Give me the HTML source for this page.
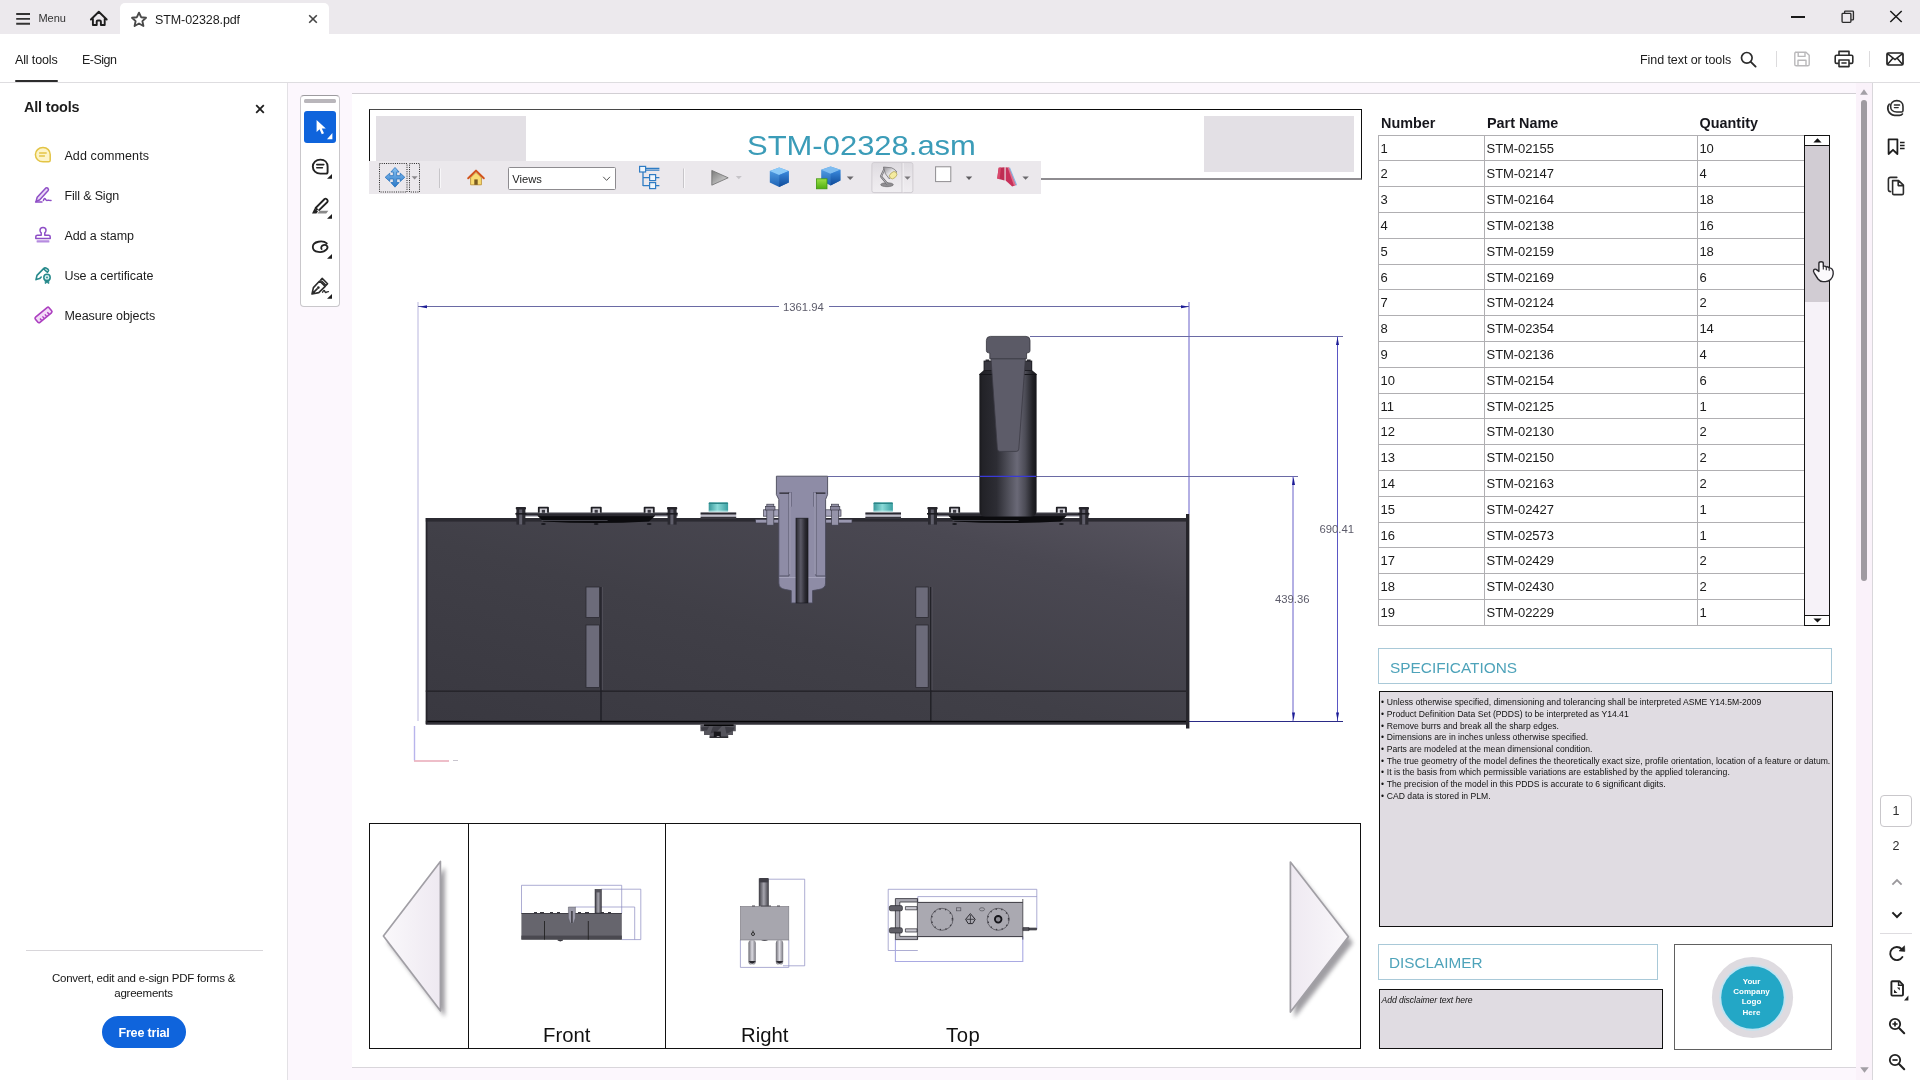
<!DOCTYPE html>
<html lang="en">
<head>
<meta charset="utf-8">
<title>STM-02328.pdf</title>
<style>
*{box-sizing:border-box;margin:0;padding:0}
html,body{width:1920px;height:1080px;overflow:hidden}
body{position:relative;background:#fcf7fd;font-family:"Liberation Sans",sans-serif;color:#2c2c2c;font-size:12.5px}
.abs{position:absolute}
.t{position:absolute;white-space:nowrap;line-height:1}
svg{position:absolute;overflow:visible}
#titlebar{left:0;top:0;width:1920px;height:34px;background:#ece9ed}
#tab{left:120px;top:3px;width:209px;height:32px;background:#fff;border-radius:5px 5px 0 0}
#toolbar{left:0;top:34px;width:1920px;height:49px;background:#fff;border-bottom:1px solid #dedde0}
#left{left:0;top:83px;width:288px;height:997px;background:#fff;border-right:1px solid #e3e1e5}
#rail{left:1872px;top:83px;width:48px;height:997px;background:#fff;border-left:1px solid #d9d7db}
#page{left:352px;top:93px;width:1504px;height:975px;background:#fff;border-top:1px solid #d2cfd4;border-bottom:1px solid #d9d6db}
#qt{left:300px;top:95px;width:40px;height:212px;background:#fff;border:1px solid #c9c7cb;border-top-color:#9d9b9f;border-radius:4px}
.gray{background:#e0dce2}
.li{left:64.4px;font-size:12.5px;color:#1c1c1c}
.cell{position:absolute;letter-spacing:-0.08px;font-size:13px;line-height:1;color:#1a1a1a;white-space:nowrap}
.hl{position:absolute;height:1px;background:#b0afb2;left:1378px;width:426px}
.vl{position:absolute;width:1px;background:#b0afb2;top:135px;height:491px}
.sp{position:absolute;left:1381px;font-size:8.6px;line-height:1;color:#111;white-space:nowrap;letter-spacing:0.005px}
</style>
</head>
<body>
<div id="root" style="position:absolute;left:0;top:0;width:1920px;height:1080px;will-change:transform">
<!-- title bar -->
<div id="titlebar" class="abs"></div>
<div id="tab" class="abs"></div>
<svg style="left:15px;top:12px" width="16" height="14" viewBox="0 0 16 14"><path d="M1.2 2h13.8M1.2 6.9h13.8M1.2 11.8h13.8" stroke="#333" stroke-width="1.9" fill="none"/></svg>
<div class="t" style="left:38.4px;top:13.4px;font-size:11px;color:#333">Menu</div>
<svg style="left:89px;top:10px" width="20" height="17" viewBox="0 0 20 17"><path d="M1.9 9.5 L9.8 1.7 L17.7 9.5 M3.9 8.4 V15 H7.7 V11.6 Q7.7 10.5 8.8 10.5 H10.8 Q11.9 10.5 11.9 11.6 V15 H15.7 V8.4" stroke="#1e1e1e" stroke-width="1.9" fill="none" stroke-linejoin="round" stroke-linecap="round"/></svg>
<svg style="left:130px;top:10.6px" width="18" height="17" viewBox="0 0 18 17"><path d="M9 1.7 L11.1 6.2 L16 6.8 L12.4 10.1 L13.4 15 L9 12.5 L4.6 15 L5.6 10.1 L2 6.8 L6.9 6.2 Z" stroke="#4a4a4a" stroke-width="1.9" fill="none" stroke-linejoin="round"/></svg>
<div class="t" style="left:155px;top:14px;font-size:12.5px;letter-spacing:-0.09px;color:#1c1c1c">STM-02328.pdf</div>
<svg style="left:308px;top:14px" width="10" height="10" viewBox="0 0 10 10"><path d="M1.2 1.2 L8.8 8.8 M8.8 1.2 L1.2 8.8" stroke="#444" stroke-width="1.6" fill="none"/></svg>
<!-- window controls -->
<svg style="left:1790px;top:15px" width="16" height="4"><path d="M1 2h14" stroke="#1a1a1a" stroke-width="2"/></svg>
<svg style="left:1840.8px;top:10px" width="14.4" height="13.5" viewBox="0 0 16 15"><rect x="1.2" y="3.8" width="9.8" height="10" rx="0.9" fill="none" stroke="#2c2c2c" stroke-width="1.5"/><path d="M4 3.6 V2 Q4 1.2 4.8 1.2 H13 Q13.8 1.2 13.8 2 V10.2 Q13.8 11 13 11 H11.2" fill="none" stroke="#2c2c2c" stroke-width="1.5"/></svg>
<svg style="left:1889px;top:10px" width="14" height="13" viewBox="0 0 14 13"><path d="M1.3 1 L12.7 12 M12.7 1 L1.3 12" stroke="#1a1a1a" stroke-width="1.5" fill="none"/></svg>
<!-- toolbar -->
<div id="toolbar" class="abs"></div>
<div class="t" style="left:15px;top:54px;font-size:12.5px;letter-spacing:-0.14px;color:#161616">All tools</div>
<div class="abs" style="left:15px;top:80px;width:43px;height:2px;background:#2c2c2c;border-radius:1px"></div>
<div class="t" style="left:82px;top:54px;font-size:12.5px;letter-spacing:-0.5px;color:#222">E-Sign</div>
<div class="t" style="left:1640px;top:54px;font-size:12.5px;letter-spacing:-0.07px;color:#1c1c1c">Find text or tools</div>
<svg style="left:1740px;top:51px" width="17" height="17" viewBox="0 0 17 17"><circle cx="6.8" cy="6.8" r="5.3" fill="none" stroke="#2c2c2c" stroke-width="1.7"/><path d="M10.8 10.8 L15.6 15.6" stroke="#2c2c2c" stroke-width="1.9" stroke-linecap="round"/></svg>
<div class="abs" style="left:1776px;top:51px;width:1px;height:16px;background:#dcdbdd"></div>
<svg style="left:1793px;top:51px" width="18" height="16" viewBox="0 0 18 16"><path d="M2 1.2 H13 L16.2 4.2 V13.4 Q16.2 14.8 14.8 14.8 H3.2 Q1.8 14.8 1.8 13.4 V2.6 Q1.8 1.2 3.2 1.2 M5.2 1.4 V5.4 H12 V1.4 M5 14.6 V9.2 H13 V14.6" fill="none" stroke="#b9b8ba" stroke-width="1.4" stroke-linejoin="round"/></svg>
<svg style="left:1834px;top:50px" width="20" height="18" viewBox="0 0 20 18"><path d="M5 5 V1.4 H15 V5 M5 13.4 H2.6 Q1.2 13.4 1.2 12 V6.6 Q1.2 5.2 2.6 5.2 H17.4 Q18.8 5.2 18.8 6.6 V12 Q18.8 13.4 17.4 13.4 H15 M5 10 H15 V16.6 H5 Z M7.4 13 H12.6" fill="none" stroke="#2c2c2c" stroke-width="1.6" stroke-linejoin="round"/></svg>
<div class="abs" style="left:1869px;top:51px;width:1px;height:16px;background:#dcdbdd"></div>
<svg style="left:1886px;top:52px" width="18" height="14" viewBox="0 0 18 14"><rect x="1" y="1" width="16" height="12" rx="1.2" fill="none" stroke="#222" stroke-width="1.7"/><path d="M1.4 1.6 L9 7.6 L16.6 1.6 M1.4 12.4 L6.6 6.6 M16.6 12.4 L11.4 6.6" fill="none" stroke="#222" stroke-width="1.5"/></svg>
<!-- left panel -->
<div id="left" class="abs"></div>
<div class="t" style="left:24px;top:100px;font-size:14.4px;font-weight:bold;letter-spacing:-0.15px;color:#1e1e1e">All tools</div>
<svg style="left:255px;top:104px" width="10" height="10" viewBox="0 0 10 10"><path d="M1.2 1.2 L8.8 8.8 M8.8 1.2 L1.2 8.8" stroke="#1e1e1e" stroke-width="1.8" fill="none"/></svg>
<!-- add comments -->
<svg style="left:34px;top:146px" width="18" height="18" viewBox="0 0 18 18"><path d="M9 1.6 C4.6 1.6 1.4 4.6 1.4 8.6 C1.4 12.6 4.6 15.8 9 15.8 H14.6 Q16.2 15.8 16.2 14.2 V8.6 C16.2 4.6 13.4 1.6 9 1.6 Z" fill="#fdf4c8" stroke="#e3c445" stroke-width="1.5"/><path d="M5.6 7 H12.2 M5.6 10 H10.4" stroke="#e3c445" stroke-width="1.4" stroke-linecap="round"/></svg>
<div class="t li" style="top:150px;letter-spacing:0.11px">Add comments</div>
<!-- fill & sign -->
<svg style="left:34px;top:186px" width="19" height="18" viewBox="0 0 19 18"><path d="M2 15.6 L3.2 11.2 L11.6 2.2 Q12.8 1.2 14 2.4 Q15 3.6 14 4.8 L5.8 13.8 Z" fill="#ead9f6" stroke="#8e4ec6" stroke-width="1.5" stroke-linejoin="round"/><path d="M1.6 16 H8 M9.4 14.4 Q10.4 11.6 11.4 13.2 T13.2 14.4 T15 14.2 L17 14.4" fill="none" stroke="#8e4ec6" stroke-width="1.5" stroke-linecap="round"/></svg>
<div class="t li" style="top:190px;letter-spacing:-0.14px">Fill &amp; Sign</div>
<!-- stamp -->
<svg style="left:34px;top:226px" width="18" height="18" viewBox="0 0 18 18"><path d="M9 1.4 Q12 1.4 12 4.2 Q12 5.8 10.8 6.8 V9.2 H14.6 Q16.2 9.2 16.2 10.8 V12.6 H1.8 V10.8 Q1.8 9.2 3.4 9.2 H7.2 V6.8 Q6 5.8 6 4.2 Q6 1.4 9 1.4 Z" fill="#fff" stroke="#8e4ec6" stroke-width="1.5" stroke-linejoin="round"/><rect x="2.6" y="14.2" width="12.8" height="2.4" rx="0.6" fill="#b68be0"/></svg>
<div class="t li" style="top:230px;letter-spacing:-0.06px">Add a stamp</div>
<!-- certificate -->
<svg style="left:34px;top:266px" width="19" height="19" viewBox="0 0 19 19"><path d="M2 13.6 L3 9.4 L9.6 2.6 Q10.6 1.6 11.8 2 L14 3.2 Q15 4.2 14.2 5.2 L13.4 6.2 M2 13.6 L5.6 12.6 L7.2 11 M9.8 3 L12.6 5.6" fill="none" stroke="#26898b" stroke-width="1.6" stroke-linejoin="round" stroke-linecap="round"/><circle cx="13" cy="11.4" r="3.2" fill="#d6f0f0" stroke="#26898b" stroke-width="1.5"/><circle cx="13" cy="11.4" r="0.9" fill="#26898b"/><path d="M11.2 14.2 V17.6 L13 16.4 L14.8 17.6 V14.2" fill="#26898b" stroke="#26898b" stroke-width="0.8" stroke-linejoin="round"/></svg>
<div class="t li" style="top:270px;letter-spacing:-0.04px">Use a certificate</div>
<!-- measure -->
<svg style="left:34px;top:306px" width="19" height="18" viewBox="0 0 19 18"><g transform="rotate(-40 9.5 9)"><rect x="0.6" y="5.6" width="17.8" height="6.8" rx="1.4" fill="#f3dcf7" stroke="#ac3fc0" stroke-width="1.6"/><path d="M4.6 9.4 V12 M7.8 9.4 V12 M11 9.4 V12 M14.2 9.4 V12" stroke="#ac3fc0" stroke-width="1.4"/></g></svg>
<div class="t li" style="top:310px;letter-spacing:-0.06px">Measure objects</div>
<!-- bottom promo -->
<div class="abs" style="left:26px;top:949.6px;width:237px;height:1px;background:#d8d6da"></div>
<div class="t" style="left:0;width:287px;text-align:center;top:973px;font-size:11.5px;letter-spacing:-0.22px;color:#161616">Convert, edit and e-sign PDF forms &amp;</div>
<div class="t" style="left:0;width:287px;text-align:center;top:988px;font-size:11.5px;letter-spacing:-0.22px;color:#161616">agreements</div>
<div class="abs" style="left:102px;top:1016px;width:84px;height:32px;border-radius:16px;background:#0f64dc"></div>
<div class="t" style="left:102px;width:84px;text-align:center;top:1026.8px;font-size:12.5px;font-weight:bold;letter-spacing:-0.18px;color:#fff">Free trial</div>
<!-- quick tools -->
<div id="qt" class="abs"></div>
<div class="abs" style="left:304px;top:99px;width:32px;height:4px;border-radius:1.5px;background:#b9b6bb"></div>
<div class="abs" style="left:304px;top:111px;width:32px;height:32px;border-radius:3px;background:#0f64dc"></div>
<svg style="left:314.6px;top:119px" width="14" height="17" viewBox="0 0 14 17"><path d="M1.6 1 L1.6 13 L4.6 10.2 L6.8 15.2 L9 14.2 L6.8 9.4 L10.8 9.4 Z" fill="#fff"/></svg>
<svg style="left:327px;top:132.6px" width="6" height="7"><path d="M5.4 0 V6.2 H0 Z" fill="#fff"/></svg>
<svg style="left:311px;top:158px" width="20" height="20" viewBox="0 0 20 20"><path d="M9.4 1.6 C5 1.6 1.8 4.6 1.8 8.6 C1.8 12.6 5 15.6 9.4 15.6 H15 Q16.6 15.6 16.6 14 V8.6 C16.6 4.6 13.8 1.6 9.4 1.6 Z" fill="none" stroke="#222" stroke-width="1.9"/><path d="M5.8 6.6 H12.8 M5.8 9.8 H11.4" stroke="#222" stroke-width="1.6" stroke-linecap="round"/></svg>
<svg style="left:327px;top:174px" width="5" height="5"><path d="M5 0 V4.8 H0 Z" fill="#1e1e1e"/></svg>
<svg style="left:311px;top:197px" width="20" height="20" viewBox="0 0 20 20"><path d="M6.6 13 L4.6 11 L13.6 2 Q14.6 1.2 15.6 2.2 L16.4 3 Q17.2 4 16.4 5 L7.6 13.6" fill="none" stroke="#222" stroke-width="1.8" stroke-linejoin="round"/><path d="M1 16.6 L3.6 11.2 L7 14.6 L5.4 16.6 Z" fill="#222"/><path d="M6.4 16.6 L8.6 13.8 H17.4 L15.2 16.6 Z" fill="#8a8a8a"/></svg>
<svg style="left:327px;top:214px" width="5" height="5"><path d="M5 0 V4.8 H0 Z" fill="#1e1e1e"/></svg>
<svg style="left:311px;top:238px" width="20" height="18" viewBox="0 0 20 18"><path d="M15.8 5.4 C12 2 1.8 3.2 1.8 9 C1.8 14.8 11.8 15.6 15.6 11.4 C17.8 8.8 15.6 6.2 12.4 7.2 C10.4 7.8 9.6 9.8 10.6 11" fill="none" stroke="#222" stroke-width="1.8" stroke-linecap="round"/></svg>
<svg style="left:327px;top:254px" width="5" height="5"><path d="M5 0 V4.8 H0 Z" fill="#1e1e1e"/></svg>
<svg style="left:310px;top:277px" width="22" height="20" viewBox="0 0 22 20"><path d="M2 17 L3.4 10.6 L9.6 4 L15.2 9.4 L8.8 15.6 Z M2.4 16.6 L7.6 11.4" fill="none" stroke="#2c2c2c" stroke-width="1.6" stroke-linejoin="round"/><circle cx="8.4" cy="10.6" r="1.3" fill="#2c2c2c"/><path d="M10.6 3 L12.2 1.4 L17.6 6.8 L16 8.4 Z" fill="none" stroke="#2c2c2c" stroke-width="1.5" stroke-linejoin="round"/><path d="M12.6 15.2 Q13.8 12.4 14.8 14.4 T16.6 15 L18.4 14.6" fill="none" stroke="#2c2c2c" stroke-width="1.4" stroke-linecap="round"/></svg>
<svg style="left:327px;top:294px" width="5" height="5"><path d="M5 0 V4.8 H0 Z" fill="#1e1e1e"/></svg>
<!-- page -->
<div id="page" class="abs"></div>
<!-- vertical scrollbar -->
<div class="abs" style="left:1856px;top:83px;width:16px;height:997px;background:#faf2fa"></div>
<svg style="left:1860px;top:89px" width="8" height="6"><path d="M4 0.2 L7.9 5.8 H0.1 Z" fill="#a39fa6"/></svg>
<div class="abs" style="left:1861px;top:100px;width:6px;height:481px;border-radius:3px;background:#9f9aa1"></div>
<svg style="left:1859.5px;top:1067.4px" width="9" height="6"><path d="M4.5 5.8 L8.8 0.2 H0.2 Z" fill="#a29fa5"/></svg>
<!-- right rail -->
<div id="rail" class="abs"></div>
<svg style="left:1886px;top:99px" width="20" height="19" viewBox="0 0 20 19"><path d="M10.8 1.6 C7 1.6 4.6 4.2 4.6 7.4 C4.6 10.6 7 13 10.8 13 H15.6 Q17 13 17 11.6 V7.4 C17 4.2 14.6 1.6 10.8 1.6 Z" fill="none" stroke="#2c2c2c" stroke-width="1.6"/><path d="M8.4 6 H13.6 M8.4 8.6 H12.2" stroke="#2c2c2c" stroke-width="1.4" stroke-linecap="round"/><path d="M3.2 5.2 C0.4 8.4 1.6 15.4 8.6 16.4 H13.4 Q15.4 16.4 16.4 15" fill="none" stroke="#2c2c2c" stroke-width="1.6" stroke-linecap="round"/></svg>
<svg style="left:1887px;top:138px" width="20" height="18" viewBox="0 0 20 18"><path d="M1.6 1.4 H10.4 V16 L6 11.8 L1.6 16 Z" fill="none" stroke="#1e1e1e" stroke-width="1.8" stroke-linejoin="round"/><path d="M13 4.4 H17.6 M13 7.4 H17.6 M13 10.4 H17.6" stroke="#1e1e1e" stroke-width="1.5"/></svg>
<svg style="left:1887px;top:176px" width="18" height="20" viewBox="0 0 18 20"><path d="M5.6 4.6 H11.6 L16.4 9.2 V17.2 Q16.4 18.6 15 18.6 H7 Q5.6 18.6 5.6 17.2 Z M11.2 4.8 V9.6 H16.2" fill="none" stroke="#2c2c2c" stroke-width="1.6" stroke-linejoin="round"/><path d="M3.6 15.6 Q1.4 15.6 1.4 13.4 V3.6 Q1.4 1.4 3.6 1.4 H9.8" fill="none" stroke="#2c2c2c" stroke-width="1.6" stroke-linecap="round"/></svg>
<div class="abs" style="left:1880px;top:795px;width:32px;height:32px;border:1px solid #c9c7cb;border-radius:4px;background:#fff"></div>
<div class="t" style="left:1880px;width:32px;text-align:center;top:805px;font-size:12.5px;color:#2c2c2c">1</div>
<div class="t" style="left:1880px;width:32px;text-align:center;top:840px;font-size:12.5px;color:#2c2c2c">2</div>
<svg style="left:1891px;top:878px" width="12" height="8" viewBox="0 0 12 8"><path d="M1.4 6.6 L6 2 L10.6 6.6" fill="none" stroke="#9a989c" stroke-width="1.8"/></svg>
<svg style="left:1891px;top:911px" width="12" height="8" viewBox="0 0 12 8"><path d="M1.4 1.4 L6 6 L10.6 1.4" fill="none" stroke="#1e1e1e" stroke-width="2"/></svg>
<div class="abs" style="left:1880px;top:933px;width:32px;height:1px;background:#dedce0"></div>
<svg style="left:1880px;top:938px" width="36" height="66" viewBox="0 0 36 66"><path d="M22.4 19.1 A6.6 6.6 0 1 1 21.6 11" fill="none" stroke="#222" stroke-width="1.9" stroke-linecap="round"/><path d="M24.5 7.8 L24.8 13.4 L19 12.9 Z" fill="#222" stroke="#222" stroke-width="0.6" stroke-linejoin="round"/><path d="M11.4 44 Q11.4 43.2 12.4 43.2 H19.4 L23 46.8 V56.6 Q23 57.6 22 57.6 H12.4 Q11.4 57.6 11.4 56.6 Z" fill="none" stroke="#222" stroke-width="1.9" stroke-linejoin="round"/><path d="M18.6 43.4 V47.2 H22.8" fill="none" stroke="#222" stroke-width="1.5"/><path d="M14 51.4 V55 H17.4 Z M19.8 52.4 V49.4 H17 Z" fill="#222"/><path d="M28.4 57.6 V62.6 H24 Z" fill="#222"/></svg>

<svg style="left:1888px;top:1016.6px" width="18" height="18" viewBox="0 0 18 18"><circle cx="7" cy="7" r="5.2" fill="none" stroke="#222" stroke-width="1.8"/><path d="M11 11 L16.2 16.2" stroke="#222" stroke-width="2.1" stroke-linecap="round"/><path d="M4.4 7 H9.6 M7 4.4 V9.6" stroke="#222" stroke-width="1.7"/></svg>
<svg style="left:1888px;top:1052.6px" width="18" height="18" viewBox="0 0 18 18"><circle cx="7" cy="7" r="5.2" fill="none" stroke="#222" stroke-width="1.8"/><path d="M11 11 L16.2 16.2" stroke="#222" stroke-width="2.1" stroke-linecap="round"/><path d="M4.4 7 H9.6" stroke="#222" stroke-width="1.7"/></svg>
<!-- title box -->
<div class="abs" style="left:369px;top:109px;width:993px;height:71px;border:1px solid #111;border-top:1px solid #4a4a4a;border-bottom:2px solid #8e8c90"></div><div class="abs" style="left:640px;top:108.6px;width:722px;height:1.7px;background:#0a0a0a"></div>
<div class="abs" style="left:376px;top:116px;width:150px;height:56px;background:#e3e0e5"></div>
<div class="abs" style="left:1204px;top:116px;width:150px;height:56px;background:#e3e0e5"></div>
<div class="t" style="left:746.5px;top:131.6px;font-size:28px;color:#3b9cb8;transform:scaleX(1.106);transform-origin:0 0">STM-02328.asm</div>
<!-- parts table -->
<div class="t" style="left:1381px;top:115.6px;font-size:14.4px;font-weight:bold;color:#16161c">Number</div>
<div class="t" style="left:1487px;top:115.6px;font-size:14.4px;font-weight:bold;color:#16161c">Part Name</div>
<div class="t" style="left:1699.6px;top:115.6px;font-size:14.4px;font-weight:bold;color:#16161c">Quantity</div>
<div class="hl" style="top:135px"></div>
<div class="hl" style="top:160px"></div>
<div class="hl" style="top:186px"></div>
<div class="hl" style="top:212px"></div>
<div class="hl" style="top:238px"></div>
<div class="hl" style="top:264px"></div>
<div class="hl" style="top:289px"></div>
<div class="hl" style="top:315px"></div>
<div class="hl" style="top:341px"></div>
<div class="hl" style="top:367px"></div>
<div class="hl" style="top:393px"></div>
<div class="hl" style="top:418px"></div>
<div class="hl" style="top:444px"></div>
<div class="hl" style="top:470px"></div>
<div class="hl" style="top:496px"></div>
<div class="hl" style="top:522px"></div>
<div class="hl" style="top:547px"></div>
<div class="hl" style="top:573px"></div>
<div class="hl" style="top:599px"></div>
<div class="hl" style="top:625px"></div>
<div class="cell" style="left:1380.6px;top:142.1px">1</div><div class="cell" style="left:1486.6px;top:142.1px">STM-02155</div><div class="cell" style="left:1699.4px;top:142.1px">10</div>
<div class="cell" style="left:1380.6px;top:167.1px">2</div><div class="cell" style="left:1486.6px;top:167.1px">STM-02147</div><div class="cell" style="left:1699.4px;top:167.1px">4</div>
<div class="cell" style="left:1380.6px;top:193.1px">3</div><div class="cell" style="left:1486.6px;top:193.1px">STM-02164</div><div class="cell" style="left:1699.4px;top:193.1px">18</div>
<div class="cell" style="left:1380.6px;top:219.1px">4</div><div class="cell" style="left:1486.6px;top:219.1px">STM-02138</div><div class="cell" style="left:1699.4px;top:219.1px">16</div>
<div class="cell" style="left:1380.6px;top:245.1px">5</div><div class="cell" style="left:1486.6px;top:245.1px">STM-02159</div><div class="cell" style="left:1699.4px;top:245.1px">18</div>
<div class="cell" style="left:1380.6px;top:271.1px">6</div><div class="cell" style="left:1486.6px;top:271.1px">STM-02169</div><div class="cell" style="left:1699.4px;top:271.1px">6</div>
<div class="cell" style="left:1380.6px;top:296.1px">7</div><div class="cell" style="left:1486.6px;top:296.1px">STM-02124</div><div class="cell" style="left:1699.4px;top:296.1px">2</div>
<div class="cell" style="left:1380.6px;top:322.1px">8</div><div class="cell" style="left:1486.6px;top:322.1px">STM-02354</div><div class="cell" style="left:1699.4px;top:322.1px">14</div>
<div class="cell" style="left:1380.6px;top:348.1px">9</div><div class="cell" style="left:1486.6px;top:348.1px">STM-02136</div><div class="cell" style="left:1699.4px;top:348.1px">4</div>
<div class="cell" style="left:1380.6px;top:374.1px">10</div><div class="cell" style="left:1486.6px;top:374.1px">STM-02154</div><div class="cell" style="left:1699.4px;top:374.1px">6</div>
<div class="cell" style="left:1380.6px;top:400.1px">11</div><div class="cell" style="left:1486.6px;top:400.1px">STM-02125</div><div class="cell" style="left:1699.4px;top:400.1px">1</div>
<div class="cell" style="left:1380.6px;top:425.1px">12</div><div class="cell" style="left:1486.6px;top:425.1px">STM-02130</div><div class="cell" style="left:1699.4px;top:425.1px">2</div>
<div class="cell" style="left:1380.6px;top:451.1px">13</div><div class="cell" style="left:1486.6px;top:451.1px">STM-02150</div><div class="cell" style="left:1699.4px;top:451.1px">2</div>
<div class="cell" style="left:1380.6px;top:477.1px">14</div><div class="cell" style="left:1486.6px;top:477.1px">STM-02163</div><div class="cell" style="left:1699.4px;top:477.1px">2</div>
<div class="cell" style="left:1380.6px;top:503.1px">15</div><div class="cell" style="left:1486.6px;top:503.1px">STM-02427</div><div class="cell" style="left:1699.4px;top:503.1px">1</div>
<div class="cell" style="left:1380.6px;top:529.1px">16</div><div class="cell" style="left:1486.6px;top:529.1px">STM-02573</div><div class="cell" style="left:1699.4px;top:529.1px">1</div>
<div class="cell" style="left:1380.6px;top:554.1px">17</div><div class="cell" style="left:1486.6px;top:554.1px">STM-02429</div><div class="cell" style="left:1699.4px;top:554.1px">2</div>
<div class="cell" style="left:1380.6px;top:580.1px">18</div><div class="cell" style="left:1486.6px;top:580.1px">STM-02430</div><div class="cell" style="left:1699.4px;top:580.1px">2</div>
<div class="cell" style="left:1380.6px;top:606.1px">19</div><div class="cell" style="left:1486.6px;top:606.1px">STM-02229</div><div class="cell" style="left:1699.4px;top:606.1px">1</div>
<div class="vl" style="left:1378px"></div>
<div class="vl" style="left:1484px"></div>
<div class="vl" style="left:1697px"></div>
<div class="abs" style="left:1804px;top:135px;width:26px;height:491px;background:#f6f2f8;border:1px solid #141414"></div>
<div class="abs" style="left:1805px;top:145px;width:24px;height:157px;background:#d1ccd3"></div>
<div class="abs" style="left:1804px;top:135px;width:26px;height:11px;background:#fff;border:1px solid #141414"></div>
<div class="abs" style="left:1804px;top:615px;width:26px;height:11px;background:#fff;border:1px solid #141414"></div>
<svg style="left:1812.5px;top:138px" width="9" height="5"><path d="M4.5 0.3 L8.6 4.4 H0.4 Z" fill="#111"/></svg>
<svg style="left:1812.5px;top:618px" width="9" height="5"><path d="M4.5 4.6 L8.6 0.5 H0.4 Z" fill="#111"/></svg>
<svg style="left:1810px;top:258px" width="26" height="26" viewBox="0 0 26 26"><path d="M8.9 13.4 V5.4 Q8.9 3.8 11.1 3.8 Q13.3 3.8 13.3 5.4 V8.3 Q15 7.7 16.3 8.9 Q18 8.5 19 9.9 Q21 9.7 22.1 11.2 Q23.6 13.2 23.2 16 Q22.8 19.6 20.6 21.6 Q18.6 23.6 15.4 23.6 H13 Q10 23.6 8 21 L4.4 15.4 Q2.9 13.2 3.7 12 Q4.7 10.7 6.1 11.4 Z" fill="#fbf9fc" stroke="#2a292e" stroke-width="1.4" stroke-linejoin="round"/><path d="M13.3 8.3 V11.6 M16.3 9.1 V12.2 M19.2 10.2 V12.8" stroke="#2a292e" stroke-width="1.1" fill="none"/></svg>
<!-- specs -->
<div class="abs" style="left:1378px;top:648px;width:454px;height:36px;background:#fff;border:1px solid #a9c9d8"></div>
<div class="t" style="left:1390px;top:659.5px;font-size:15.4px;color:#4ea3ba">SPECIFICATIONS</div>
<div class="abs gray" style="left:1379px;top:691px;width:454px;height:236px;border:1px solid #111"></div>
<div class="sp" style="top:697.7px">&bull;<span style="margin-left:2.8px">Unless otherwise specified, dimensioning and tolerancing shall be interpreted ASME Y14.5M-2009</span></div>
<div class="sp" style="top:709.7px">&bull;<span style="margin-left:2.8px">Product Definition Data Set (PDDS) to be interpreted as Y14.41</span></div>
<div class="sp" style="top:721.7px">&bull;<span style="margin-left:2.8px">Remove burrs and break all the sharp edges.</span></div>
<div class="sp" style="top:732.7px">&bull;<span style="margin-left:2.8px">Dimensions are in inches unless otherwise specified.</span></div>
<div class="sp" style="top:744.7px">&bull;<span style="margin-left:2.8px">Parts are modeled at the mean dimensional condition.</span></div>
<div class="sp" style="top:756.7px">&bull;<span style="margin-left:2.8px">The true geometry of the model defines the theoretically exact size, profile orientation, location of a feature or datum.</span></div>
<div class="sp" style="top:767.7px">&bull;<span style="margin-left:2.8px">It is the basis from which permissible variations are established by the applied tolerancing.</span></div>
<div class="sp" style="top:779.7px">&bull;<span style="margin-left:2.8px">The precision of the model in this PDDS is accurate to 6 significant digits.</span></div>
<div class="sp" style="top:791.7px">&bull;<span style="margin-left:2.8px">CAD data is stored in PLM.</span></div>
<!-- disclaimer -->
<div class="abs" style="left:1378px;top:944px;width:280px;height:36px;background:#fff;border:1px solid #a9c9d8"></div>
<div class="t" style="left:1389px;top:955px;font-size:15.3px;color:#4ea3ba">DISCLAIMER</div>
<div class="abs gray" style="left:1379px;top:989px;width:284px;height:60px;border:1px solid #111"></div>
<div class="t" style="left:1381.5px;top:995.5px;font-size:8.6px;font-style:italic;color:#111;letter-spacing:-0.05px">Add disclaimer text here</div>
<div class="abs" style="left:1674px;top:944px;width:158px;height:106px;background:#fff;border:1px solid #606060"></div>
<svg style="left:1708px;top:953px" width="90" height="90" viewBox="0 0 90 90"><circle cx="44.5" cy="44.5" r="40.6" fill="#dedbe0"/><circle cx="44.5" cy="44.5" r="33.2" fill="#bfe3f1"/><circle cx="44.5" cy="44.5" r="31.3" fill="#23a7c6"/><g font-family="'Liberation Sans',sans-serif" font-weight="bold" font-size="8" fill="#fff" text-anchor="middle"><text x="43.5" y="31.2">Your</text><text x="43.5" y="41.3">Company</text><text x="43.5" y="51.4">Logo</text><text x="43.5" y="61.5">Here</text></g></svg>
<!-- 3D toolbar -->
<div class="abs" style="left:369px;top:161px;width:672px;height:33px;background:#ebe8ec"></div>
<svg style="left:369px;top:161px" width="672" height="34" viewBox="369 161 672 34">
<defs>
<linearGradient id="gb" x1="0" y1="0" x2="0" y2="1"><stop offset="0" stop-color="#8cc4f2"/><stop offset="1" stop-color="#2a78c8"/></linearGradient>
<linearGradient id="gp" x1="0" y1="0" x2="1" y2="1"><stop offset="0" stop-color="#7a7a7a"/><stop offset="0.55" stop-color="#b4b4b4"/><stop offset="1" stop-color="#dcdcdc"/></linearGradient>
<linearGradient id="gc1" x1="0" y1="0" x2="0" y2="1"><stop offset="0" stop-color="#5aa6ea"/><stop offset="1" stop-color="#1d62b4"/></linearGradient>
<linearGradient id="gc2" x1="0" y1="0" x2="0" y2="1"><stop offset="0" stop-color="#3b8ade"/><stop offset="1" stop-color="#0f4a98"/></linearGradient>
<linearGradient id="gg" x1="0" y1="0" x2="0" y2="1"><stop offset="0" stop-color="#9be046"/><stop offset="1" stop-color="#4fae12"/></linearGradient>
<linearGradient id="gl" x1="0" y1="0" x2="0" y2="1"><stop offset="0" stop-color="#dedbe0"/><stop offset="0.6" stop-color="#ebe8ec"/><stop offset="1" stop-color="#f0eef1"/></linearGradient>
<linearGradient id="gs" x1="0" y1="0" x2="1" y2="1"><stop offset="0" stop-color="#8d8b90"/><stop offset="0.5" stop-color="#e4e3e6"/><stop offset="1" stop-color="#a5a3a8"/></linearGradient>
</defs>
<!-- move btn -->
<rect x="379.5" y="163.5" width="27.5" height="28.5" fill="none" stroke="#222" stroke-width="1" stroke-dasharray="1 1.2"/>
<rect x="409.5" y="163.5" width="10" height="28.5" fill="none" stroke="#222" stroke-width="1" stroke-dasharray="1 1.2"/>
<g transform="translate(395 177.3) scale(0.92) translate(-393.5 -177.7)"><path d="M393.5 167 L398 172 H395.3 V175.9 H399.2 V173.2 L404.2 177.7 L399.2 182.2 V179.5 H395.3 V183.4 H398 L393.5 188.4 L389 183.4 H391.7 V179.5 H387.8 V182.2 L382.8 177.7 L387.8 173.2 V175.9 H391.7 V172 H389 Z" fill="url(#gb)" stroke="#2c74bf" stroke-width="0.9" stroke-linejoin="round"/></g>
<path d="M411.6 176.3 H417.6 L414.6 179.6 Z" fill="#8a888c"/>
<path d="M439.5 168.5 V188" stroke="#c7c5c9" stroke-width="1"/><path d="M440.5 168.5 V188" stroke="#f8f7f9" stroke-width="1"/>
<!-- home -->
<path d="M470.6 177.6 V184.8 H481.4 V177.6 L476 172.4 Z" fill="#f9dc73" stroke="#b98a2c" stroke-width="0.8"/>
<rect x="474.3" y="179.4" width="3.4" height="5.4" fill="#7a5a22"/>
<path d="M468.2 178.2 L476 170.6 L483.8 178.2" fill="none" stroke="#d2541c" stroke-width="2" stroke-linejoin="round" stroke-linecap="round"/>
<!-- views select -->
<rect x="508.5" y="167.5" width="107" height="22" rx="1" fill="#fff" stroke="#8d8b8f" stroke-width="1"/>
<text x="512.2" y="182.6" font-family="'Liberation Sans',sans-serif" font-size="11.2" fill="#222">Views</text>
<path d="M603.2 176.8 L606.6 180.4 L610 176.8" fill="none" stroke="#555" stroke-width="1"/>
<!-- tree -->
<path d="M645.8 168.4 H659.4 M645.8 170.2 H659.4 M643 172 V186 M643 177.6 H649.4 M643 185.6 H649.4 M655.6 177.6 H659.4 M655.6 185.6 H659.4" fill="none" stroke="#2f7cc4" stroke-width="1.3"/>
<rect x="639.6" y="166.4" width="6" height="5.6" fill="#eef6fd" stroke="#2f7cc4" stroke-width="1.2"/>
<rect x="649.6" y="174.6" width="6" height="6" fill="#eef6fd" stroke="#2f7cc4" stroke-width="1.2"/>
<rect x="649.6" y="182.6" width="6" height="6" fill="#eef6fd" stroke="#2f7cc4" stroke-width="1.2"/>
<path d="M683.5 168.5 V188" stroke="#c7c5c9" stroke-width="1"/><path d="M684.5 168.5 V188" stroke="#f8f7f9" stroke-width="1"/>
<!-- play -->
<path d="M711.8 170.4 L728.2 177.8 L711.8 185.2 Z" fill="url(#gp)" stroke="#6e6e6e" stroke-width="0.8" stroke-linejoin="round"/>
<path d="M735.8 176 H741.8 L738.8 179.2 Z" fill="#c6c4c8"/>
<!-- cube -->
<path d="M779.2 167.6 L788.8 171 V182.4 L779.2 187 L769.8 182.4 V171 Z" fill="url(#gc1)"/>
<path d="M779.2 167.6 L788.8 171 L779.2 175 L769.8 171 Z" fill="#8ccaf8"/>
<path d="M779.2 175 L788.8 171 V182.4 L779.2 187 Z" fill="url(#gc2)"/>
<!-- cube + green -->
<path d="M830.6 166.4 L840.4 169.8 V180.6 L830.6 185.4 L821.2 180.6 V169.8 Z" fill="url(#gc1)"/>
<path d="M830.6 166.4 L840.4 169.8 L830.6 173.8 L821.2 169.8 Z" fill="#7fbcf0"/>
<path d="M830.6 173.8 L840.4 169.8 V180.6 L830.6 185.4 Z" fill="url(#gc2)"/>
<rect x="816.4" y="178.8" width="10.6" height="10" fill="url(#gg)" stroke="#3f9610" stroke-width="0.8"/>
<path d="M846.8 176.4 H853.6 L850.2 180 Z" fill="#6a686c"/>
<!-- lamp btn -->
<rect x="871.9" y="162.6" width="41" height="30" rx="2" fill="url(#gl)" stroke="#d0cdd2" stroke-width="1"/>
<path d="M902.1 163 V192.4" stroke="#c9c6cb" stroke-width="1"/><path d="M903.1 163 V192.4" stroke="#f4f2f5" stroke-width="1"/>
<ellipse cx="887" cy="184.7" rx="6.3" ry="2" fill="#8f8d91" stroke="#5e5c60" stroke-width="0.6"/>
<path d="M887.4 184 L881 176.4 L884.8 168.4" fill="none" stroke="#6c6a6f" stroke-width="2.2" stroke-linejoin="round"/>
<path d="M887.4 184 L881 176.4 L884.8 168.4" fill="none" stroke="#d9d8db" stroke-width="0.7" stroke-linejoin="round"/>
<path d="M883.4 167 L891.6 167.8 Q895.6 169.4 896.8 172 L889.2 178.8 Q884.6 174.6 883.4 167 Z" fill="url(#gs)" stroke="#6a686d" stroke-width="0.7" stroke-linejoin="round"/>
<ellipse cx="893.2" cy="175.2" rx="4.1" ry="3" transform="rotate(-42 893.2 175.2)" fill="#f4eba0" stroke="#a99a48" stroke-width="0.6"/>
<path d="M904.4 176.4 H910.6 L907.5 179.8 Z" fill="#7a787c"/>
<!-- bg square -->
<rect x="935.6" y="166.8" width="15.2" height="14.8" fill="#fff" stroke="#8f8d91" stroke-width="1"/>
<path d="M965.8 176.6 H972.2 L969 180 Z" fill="#5e5c60"/>
<!-- section -->
<path d="M998.7 167.8 L1004.5 167.2 V180.4 L997.2 178.6 Z" fill="#bf2c52"/>
<path d="M998.7 167.8 L1001 167.5 L999.6 179.2 L997.2 178.6 Z" fill="#d9486c"/>
<path d="M1005.6 167.2 L1009.4 167.7 L1016 185 L1012.2 186.4 L1005.6 180.6 Z" fill="#c8305a"/>
<path d="M1007.6 167.5 L1009.4 167.7 L1016 185 L1014 185.8 Z" fill="#e0708c"/>
<path d="M1009.6 167.9 L1016.6 185.2" stroke="#86b6e2" stroke-width="1.1"/>
<path d="M1022.4 176.4 H1028.8 L1025.6 179.8 Z" fill="#6a686c"/>
</svg>
<!-- CAD model -->
<svg style="left:0;top:0" width="1920" height="1080" viewBox="0 0 1920 1080">
<defs>
<linearGradient id="tank" x1="0" y1="1" x2="1" y2="0"><stop offset="0" stop-color="#393840"/><stop offset="0.45" stop-color="#403f47"/><stop offset="0.8" stop-color="#4a4852"/><stop offset="1" stop-color="#57545f"/></linearGradient>
<linearGradient id="cyl" x1="0" y1="0" x2="1" y2="0"><stop offset="0" stop-color="#18181c"/><stop offset="0.05" stop-color="#222227"/><stop offset="0.3" stop-color="#2d2d34"/><stop offset="0.5" stop-color="#4f4f59"/><stop offset="0.66" stop-color="#6a6977"/><stop offset="0.8" stop-color="#4c4c56"/><stop offset="0.93" stop-color="#222227"/><stop offset="1" stop-color="#15151a"/></linearGradient>
<linearGradient id="teal" x1="0" y1="0" x2="1" y2="0"><stop offset="0" stop-color="#38999b"/><stop offset="0.45" stop-color="#8bdad8"/><stop offset="1" stop-color="#3aa0a2"/></linearGradient>
<linearGradient id="tube" x1="0" y1="0" x2="1" y2="0"><stop offset="0" stop-color="#2a2930"/><stop offset="0.4" stop-color="#5a5966"/><stop offset="0.75" stop-color="#2c2b33"/><stop offset="1" stop-color="#1b1b20"/></linearGradient>
</defs>
<!-- extension / dimension lines -->
<g fill="none" stroke-width="1">
<path d="M418 302 V721" stroke="#b9b6de"/>
<path d="M1189 302 V514" stroke="#6961c9"/>
<path d="M418 306.5 H779 M829 306.5 H1189" stroke="#6a6aa4"/>
<path d="M1030 336.5 H1343" stroke="#6a6aa4"/>
<path d="M828 476.5 H1298" stroke="#6a6aa4"/>
<path d="M1337.5 336 V721" stroke="#5a56c4"/>
<path d="M1293 476 V721" stroke="#6961c9"/>
<path d="M1189 721.5 H1343" stroke="#2a2a86" stroke-width="1"/>
</g>
<g fill="#1c1c96">
<path d="M419 306.7 L427 305.2 V308.2 Z"/><path d="M1189 306.7 L1181 305.2 V308.2 Z"/>
<path d="M1337.5 337 L1336 345 H1339 Z"/><path d="M1337.5 720.5 L1336 712.5 H1339 Z"/>
<path d="M1293.5 477 L1292 485 H1295 Z"/><path d="M1293.5 720.5 L1292 712.5 H1295 Z"/>
</g>
<g font-family="'Liberation Sans',sans-serif" font-size="11.3" fill="#5c5b6a">
<text x="783" y="311">1361.94</text>
<text x="1319.5" y="532.6">690.41</text>
<text x="1275" y="602.6">439.36</text>
</g>
<!-- axis triad -->
<path d="M414.5 726 V760.5" stroke="#b8b4ec" stroke-width="1.4" fill="none"/>
<path d="M414 761 H449" stroke="#e9a9b7" stroke-width="1.4" fill="none"/>
<path d="M453 760.5 H458" stroke="#c9c5ce" stroke-width="1"/>
<!-- tank -->
<rect x="425.8" y="518" width="761" height="206.4" fill="url(#tank)"/>
<rect x="425.8" y="518" width="761" height="3.6" fill="#2b2a31"/>
<rect x="425.8" y="690.4" width="761" height="1.6" fill="#26252b"/>

<rect x="425.8" y="720.8" width="761" height="1.7" fill="#060608"/><rect x="425.8" y="722.5" width="761" height="2.1" fill="#34333a"/>
<rect x="425.8" y="518" width="1.6" height="206" fill="#26252b"/>
<rect x="1186" y="514" width="3.4" height="214.5" fill="#26252b"/>
<!-- internal baffles -->
<g fill="#6c6b7a" stroke="#2a2930" stroke-width="0.8"><rect x="586" y="587" width="13.6" height="30.6"/><rect x="586" y="625" width="13.6" height="62.6"/><rect x="915.8" y="587" width="12.4" height="30.6"/><rect x="915.8" y="625" width="12.4" height="62.6"/></g>
<path d="M601 587 V721 M930.8 587 V721" stroke="#1f1f25" stroke-width="1.4" fill="none"/>
<path d="M602.3 587 V690 M932 587 V690" stroke="#5b5a66" stroke-width="0.7" fill="none"/>
<!-- left hatch -->
<path d="M537.6 516 H655 L649 521.4 Q596.3 524.6 543.6 521.4 Z" fill="#0b0b0e"/>
<rect x="516.4" y="512.8" width="161.0" height="3.4" fill="#2b2a31"/><rect x="516.4" y="512.6" width="161.0" height="0.9" fill="#4f4e58"/>
<path d="M516.4 515.8 H537.6 M655 515.8 H677.4" stroke="#8c8b98" stroke-width="0.9"/>
<path d="M541.6 520.4 H607.6" stroke="#6a6975" stroke-width="0.8" opacity="0.8"/>
<rect x="516.4" y="508.6" width="9" height="16" fill="#2a2930"/><rect x="519.1999999999999" y="508.6" width="3" height="16" fill="#5f5e6a"/><rect x="515.8" y="506.9" width="10.2" height="2.6" rx="0.8" fill="#26252b"/><rect x="515.4" y="513" width="11" height="1.6" fill="#1c1c21"/>
<rect x="667.6" y="508.6" width="9" height="16" fill="#2a2930"/><rect x="670.4" y="508.6" width="3" height="16" fill="#5f5e6a"/><rect x="667.0" y="506.9" width="10.2" height="2.6" rx="0.8" fill="#26252b"/><rect x="666.6" y="513" width="11" height="1.6" fill="#1c1c21"/>
<path d="M538.8 512.8 V507.6 H548.0 V512.8" fill="#d4d3da" stroke="#1f1f24" stroke-width="1.8" stroke-linejoin="round"/><rect x="541.8" y="509.8" width="3.2" height="3" fill="#3a3941"/>
<path d="M591.6 512.8 V507.6 H600.8000000000001 V512.8" fill="#d4d3da" stroke="#1f1f24" stroke-width="1.8" stroke-linejoin="round"/><rect x="594.6" y="509.8" width="3.2" height="3" fill="#3a3941"/>
<path d="M644.6 512.8 V507.6 H653.8000000000001 V512.8" fill="#d4d3da" stroke="#1f1f24" stroke-width="1.8" stroke-linejoin="round"/><rect x="647.6" y="509.8" width="3.2" height="3" fill="#3a3941"/>
<ellipse cx="543.4" cy="524" rx="2.4" ry="1" fill="#1a1a1f"/>
<ellipse cx="596.2" cy="524" rx="2.4" ry="1" fill="#1a1a1f"/>
<ellipse cx="649.2" cy="524" rx="2.4" ry="1" fill="#1a1a1f"/>
<!-- teal caps -->
<rect x="700.6" y="512.5" width="35.6" height="5.6" fill="#c2c1cc"/><rect x="700.6" y="512.5" width="35.6" height="2" fill="#2a2930"/><rect x="700.6" y="516.8" width="35.6" height="1.4" fill="#34333a"/><rect x="708.6999999999999" y="502.5" width="19.4" height="9.6" rx="1" fill="url(#teal)"/><rect x="708.6999999999999" y="502.5" width="19.4" height="1.4" rx="0.7" fill="#2b8587"/><rect x="708.6999999999999" y="510.6" width="19.4" height="1.6" fill="#d5eeee" opacity="0.7"/>
<rect x="865.4000000000001" y="512.5" width="35.6" height="5.6" fill="#c2c1cc"/><rect x="865.4000000000001" y="512.5" width="35.6" height="2" fill="#2a2930"/><rect x="865.4000000000001" y="516.8" width="35.6" height="1.4" fill="#34333a"/><rect x="873.5" y="502.5" width="19.4" height="9.6" rx="1" fill="url(#teal)"/><rect x="873.5" y="502.5" width="19.4" height="1.4" rx="0.7" fill="#2b8587"/><rect x="873.5" y="510.6" width="19.4" height="1.6" fill="#d5eeee" opacity="0.7"/>
<!-- centre nozzle -->
<g stroke="#3f3e4c" stroke-width="0.7">
<rect x="755.6" y="519.4" width="23.4" height="3.6" fill="#9a98b0"/><rect x="825.6" y="519.4" width="26.4" height="3.6" fill="#9a98b0"/>
<rect x="763.6" y="509.8" width="15.4" height="6.4" fill="#a3a1b9"/><rect x="825.6" y="509.8" width="15.4" height="6.4" fill="#a3a1b9"/>
<rect x="766.8" y="504.2" width="7" height="21" fill="#9593a9"/><rect x="831.6" y="504.2" width="7" height="21" fill="#9593a9"/>
<rect x="765.6" y="506.6" width="9.4" height="3.4" fill="#8a889e"/><rect x="830.4" y="506.6" width="9.4" height="3.4" fill="#8a889e"/>
</g>
<path d="M776.4 476.2 H827.6 V494.6 L825.6 499.4 V577 V583 Q825.6 588.6 818.6 589.6 L812.6 590.6 V603 H791.2 V590.6 L785.6 589.6 Q778.8 588.6 778.8 583 V499.4 L776.4 494.6 Z" fill="#8e8ca6" stroke="#4a495a" stroke-width="0.9" stroke-linejoin="round"/>
<path d="M789 492 V576 H779.4 M816 492 V576 H825.2" fill="none" stroke="#4f4e60" stroke-width="0.9"/>
<path d="M779.4 493.2 H789 M816 493.2 H825.4" fill="none" stroke="#26252d" stroke-width="1.3"/>
<path d="M791.2 492 V506 L790.2 508 V574 M813.8 492 V506 L814.8 508 V574" fill="none" stroke="#55546a" stroke-width="0.8"/>
<path d="M790 493 V574 M815 493 V574" stroke="#a5a3bb" stroke-width="1.4" fill="none"/>
<rect x="779.4" y="577" width="45.8" height="1" fill="#a5a3bb"/>
<rect x="796" y="518.2" width="12" height="84.8" fill="url(#tube)" stroke="#1c1c22" stroke-width="0.7"/>
<!-- tall pillar -->
<path d="M948.6 516 H1066.6 L1060.6 521.4 Q1007.5999999999999 524.6 954.6 521.4 Z" fill="#0b0b0e"/>
<rect x="928" y="512.8" width="160.5999999999999" height="3.4" fill="#2b2a31"/><rect x="928" y="512.6" width="160.5999999999999" height="0.9" fill="#4f4e58"/>
<path d="M928 515.8 H948.6 M1066.6 515.8 H1088.6" stroke="#8c8b98" stroke-width="0.9"/>
<path d="M952.6 520.4 H1018.6" stroke="#6a6975" stroke-width="0.8" opacity="0.8"/>
<rect x="928" y="508.6" width="9" height="16" fill="#2a2930"/><rect x="930.8" y="508.6" width="3" height="16" fill="#5f5e6a"/><rect x="927.4" y="506.9" width="10.2" height="2.6" rx="0.8" fill="#26252b"/><rect x="927" y="513" width="11" height="1.6" fill="#1c1c21"/>
<rect x="1079.4" y="508.6" width="9" height="16" fill="#2a2930"/><rect x="1082.2" y="508.6" width="3" height="16" fill="#5f5e6a"/><rect x="1078.8000000000002" y="506.9" width="10.2" height="2.6" rx="0.8" fill="#26252b"/><rect x="1078.4" y="513" width="11" height="1.6" fill="#1c1c21"/>
<path d="M950 512.8 V507.6 H959.2 V512.8" fill="#d4d3da" stroke="#1f1f24" stroke-width="1.8" stroke-linejoin="round"/><rect x="953" y="509.8" width="3.2" height="3" fill="#3a3941"/>
<path d="M1056.8 512.8 V507.6 H1066.0 V512.8" fill="#d4d3da" stroke="#1f1f24" stroke-width="1.8" stroke-linejoin="round"/><rect x="1059.8" y="509.8" width="3.2" height="3" fill="#3a3941"/>
<ellipse cx="954.6" cy="524" rx="2.4" ry="1" fill="#1a1a1f"/>
<ellipse cx="1061.3999999999999" cy="524" rx="2.4" ry="1" fill="#1a1a1f"/>
<path d="M979.4 374 L984 370 V361.4 H1031.8 V370 L1036.6 374 V511 Q1036.6 516.6 1030 516.6 H986 Q979.4 516.6 979.4 511 Z" fill="url(#cyl)"/>
<rect x="984" y="361" width="47.8" height="9.4" fill="#3a3942" stroke="#17171c" stroke-width="0.8"/>
<path d="M979.4 374.5 H1036.6" stroke="#15151a" stroke-width="1"/>
<path d="M980 476.3 H1036" stroke="#3a3ad8" stroke-width="1.2"/>
<path d="M990.4 350 H1026 L1018.8 449 Q1018.6 451.4 1016.4 451.4 H999.8 Q997.6 451.4 997.4 449 Z" fill="#5d5c69" stroke="#3c3b45" stroke-width="0.8"/>
<path d="M990.4 336.4 H1026 Q1030 336.4 1030 340.4 V350.6 Q1030 352.6 1028 352.8 L1026.6 353 V358.8 H989.8 V353 L988.4 352.8 Q986.4 352.6 986.4 350.6 V340.4 Q986.4 336.4 990.4 336.4 Z" fill="#5b5a66" stroke="#34333c" stroke-width="0.8"/><path d="M985.6 359.4 h3.6 v2 h-3.6 z M1027 359.4 h3.6 v2 h-3.6 z" fill="#2a2930"/>
<!-- drain -->
<path d="M700.4 724.6 H735.8 V731.2 H733 V735 H728.2 V737.8 H709.6 V735 H704 V731.2 H700.4 Z" fill="#56555d"/>
<path d="M704 724.4 H733.6 V726 H704 Z" fill="#060608"/>
<path d="M700.6 727.6 L709 726.4 L707 730.6 H702 Z M713 726.6 L722 726 L717 731.6 L710.4 733.6 Z M725 726.8 L734.6 727.4 L733 730.8 L726.4 733.8 Z" fill="#3a3941" opacity="0.85"/>
<rect x="713.8" y="731.6" width="7" height="5.4" fill="#17171b"/><rect x="716.6" y="735.9" width="3" height="1.1" rx="0.5" fill="#f0eff3"/>
<rect x="709.6" y="736.6" width="18.6" height="1.2" fill="#1c1c21"/>
</svg>
<!-- thumbnails strip -->
<div class="abs" style="left:369px;top:823px;width:992px;height:226px;border:1px solid #111"></div>
<div class="abs" style="left:468px;top:823px;width:1px;height:226px;background:#111"></div>
<div class="abs" style="left:665px;top:823px;width:1px;height:226px;background:#111"></div>
<div class="t" style="left:543px;top:1024.6px;font-size:20.3px;color:#111">Front</div>
<div class="t" style="left:741px;top:1024.6px;font-size:20.3px;color:#111">Right</div>
<div class="t" style="left:946px;top:1024.6px;font-size:20.3px;letter-spacing:0.6px;color:#111">Top</div>
<svg style="left:0;top:0" width="1920" height="1080" viewBox="0 0 1920 1080">
<defs>
<linearGradient id="arL" x1="0" y1="0" x2="1" y2="0"><stop offset="0" stop-color="#faf8fb"/><stop offset="1" stop-color="#eee9f1"/></linearGradient>
<linearGradient id="arR" x1="1" y1="0" x2="0" y2="0"><stop offset="0" stop-color="#faf8fb"/><stop offset="1" stop-color="#eee9f1"/></linearGradient>
<filter id="sh" x="-30%" y="-20%" width="170%" height="150%"><feGaussianBlur stdDeviation="2.2"/></filter>
<linearGradient id="pil" x1="0" y1="0" x2="1" y2="0"><stop offset="0" stop-color="#3c3b42"/><stop offset="0.5" stop-color="#a6a5ae"/><stop offset="1" stop-color="#3c3b42"/></linearGradient>
<linearGradient id="leg" x1="0" y1="0" x2="1" y2="0"><stop offset="0" stop-color="#6a6970"/><stop offset="0.5" stop-color="#dcdbe2"/><stop offset="1" stop-color="#77767e"/></linearGradient>
</defs>
<!-- arrows -->
<path d="M386 939 L443.5 864 V1014 Z" fill="#77757b" opacity="0.7" filter="url(#sh)" transform="translate(1.5,3)"/>
<path d="M383.4 936 L440.4 861.4 V1010.8 Z" fill="url(#arL)" stroke="#a19fa5" stroke-width="1.7" stroke-linejoin="round"/>
<path d="M1293 865 L1351.5 939.7 L1293 1015 Z" fill="#77757b" opacity="0.7" filter="url(#sh)" transform="translate(1.5,3)"/>
<path d="M1290.4 862 L1348.4 936.7 L1290.4 1012 Z" fill="url(#arR)" stroke="#a19fa5" stroke-width="1.7" stroke-linejoin="round"/>
<!-- Front thumb -->
<g fill="none" stroke="#8a8ac0" stroke-width="0.7">
<path d="M521.5 913 V885.3 H621.7 V913"/><path d="M601 889.2 H640.8 V939.6 H621.7"/><path d="M575 907 H634.7 V939.6"/>
</g>
<rect x="521.4" y="913" width="100.4" height="26.6" fill="#66656d"/>
<rect x="521.4" y="935.6" width="100.4" height="4" fill="#4a4950"/>
<rect x="521.4" y="913" width="100.4" height="0.9" fill="#3a3940"/>
<path d="M544.5 921 V939.6 M588.3 921 V939.6" stroke="#222" stroke-width="0.9"/>
<path d="M534 912.6 h3 m3 0 h4 m6 0 h3 m4 0 h3 m18 0 h3 m4 0 h4 m12 0 h3 m4 0 h3" stroke="#3a3940" stroke-width="1.4"/>
<rect x="595" y="889.4" width="6.4" height="23.6" fill="url(#pil)" stroke="#2a2930" stroke-width="0.5"/>
<rect x="595.6" y="889.2" width="5.2" height="3.2" fill="#55545c"/>
<path d="M568.4 907 H575.4 V918 L573.6 923.2 H570.2 L568.4 918 Z" fill="#9b9aa8" stroke="#55545c" stroke-width="0.5"/>
<rect x="571" y="911" width="1.8" height="12" fill="#4a4950"/>
<path d="M557.6 939.6 h5.4 v1 q-2.7 1.6 -5.4 0 z" fill="#3a3940"/>
<!-- Right thumb -->
<g fill="none" stroke="#8a8ac0" stroke-width="0.7">
<path d="M740.4 940 V967.4 H788.8 V940"/><path d="M768 879.2 H804.7 V965.8 H783"/>
</g>
<rect x="758.8" y="878.4" width="10" height="28" fill="url(#pil)"/>
<rect x="759.4" y="878" width="8.8" height="4.4" fill="#3f3e46"/>
<rect x="748.4" y="940" width="7.4" height="24.8" rx="3.4" fill="url(#leg)"/><path d="M748.6 961 q3.6 5.4 7.2 0" fill="#2a2930"/>
<rect x="775.8" y="940" width="7.4" height="24.8" rx="3.4" fill="url(#leg)"/><path d="M776 961 q3.6 5.4 7.2 0" fill="#2a2930"/>
<rect x="740.4" y="906.4" width="48.4" height="33.6" fill="#a7a6ae" stroke="#77767e" stroke-width="0.6"/>
<path d="M752 906 h3 m6 0 h10 m6 0 h3" stroke="#4a4950" stroke-width="1.2"/>
<circle cx="753" cy="934" r="1.5" fill="none" stroke="#222" stroke-width="0.9"/><path d="M753 930.6 v2" stroke="#222" stroke-width="0.9"/>
<path d="M761 940 q3.6 2 7.2 0" fill="#55545c"/>
<!-- Top thumb -->
<g fill="none" stroke="#8a8ac0" stroke-width="0.7">
<path d="M917.8 950.5 H888.2 V889.3 H1036.8 V929"/><path d="M917.8 902 V896.6 H1036.8"/>
</g>
<path d="M895.4 939 V961.5 H1022.8 V936.6" fill="none" stroke="#a9a9e2" stroke-width="1.1"/>
<rect x="917.8" y="902.4" width="105" height="34.2" fill="#aaa9b1"/>
<path d="M917.8 902.4 H1022.8 M917.8 936.6 H1022.8" stroke="#3a3940" stroke-width="1"/>
<path d="M1022.8 899 V939.6" stroke="#3a3940" stroke-width="0.8"/>
<g fill="none" stroke="#4a4950" stroke-width="0.7"><circle cx="942" cy="919.3" r="11"/><circle cx="998.2" cy="919.3" r="11"/></g>
<g fill="none" stroke="#3a3940" stroke-width="1.4" stroke-dasharray="1.2 4.56"><circle cx="942" cy="919.3" r="10.4"/><circle cx="998.2" cy="919.3" r="10.4"/></g>
<circle cx="998.2" cy="919.3" r="3.3" fill="#8f8e96" stroke="#15151a" stroke-width="1.8"/>
<path d="M970.4 913.6 L975.2 919.3 L972.6 923.6 H968.2 L965.6 919.3 Z" fill="none" stroke="#2a2930" stroke-width="1"/><path d="M966.4 919.3 H974.4 M970.4 915 V923" stroke="#2a2930" stroke-width="0.8"/>
<rect x="956.4" y="907.8" width="4.4" height="3" fill="none" stroke="#55545c" stroke-width="0.7"/><ellipse cx="982" cy="909.3" rx="2.6" ry="1.6" fill="none" stroke="#55545c" stroke-width="0.7"/>
<path d="M895.4 898.6 H917.6 V902 H899.8 V936.4 H917.6 V939.6 H895.4 Z" fill="#a9a8b1" stroke="#3f3e46" stroke-width="0.9"/><path d="M917.4 898.6 V939.6" stroke="#3f3e46" stroke-width="0.9"/>
<g stroke="#2a2930" fill="#5f5e66" stroke-width="0.7"><rect x="889.4" y="905.6" width="13" height="5.2" rx="1.6"/><rect x="889.4" y="927.8" width="13" height="5.2" rx="1.6"/><path d="M905.4 906.6 H917 V909.8 H905.4 Z M905.4 928.8 H917 V932 H905.4 Z" fill="#c9c8d0"/></g>
<path d="M1023 927.6 H1029 V930.6 H1023 Z M1029 928 H1036.6 L1036.6 930 H1029 Z" fill="#55545c" stroke="#2a2930" stroke-width="0.6"/>
</svg>

</div>
</body>
</html>
